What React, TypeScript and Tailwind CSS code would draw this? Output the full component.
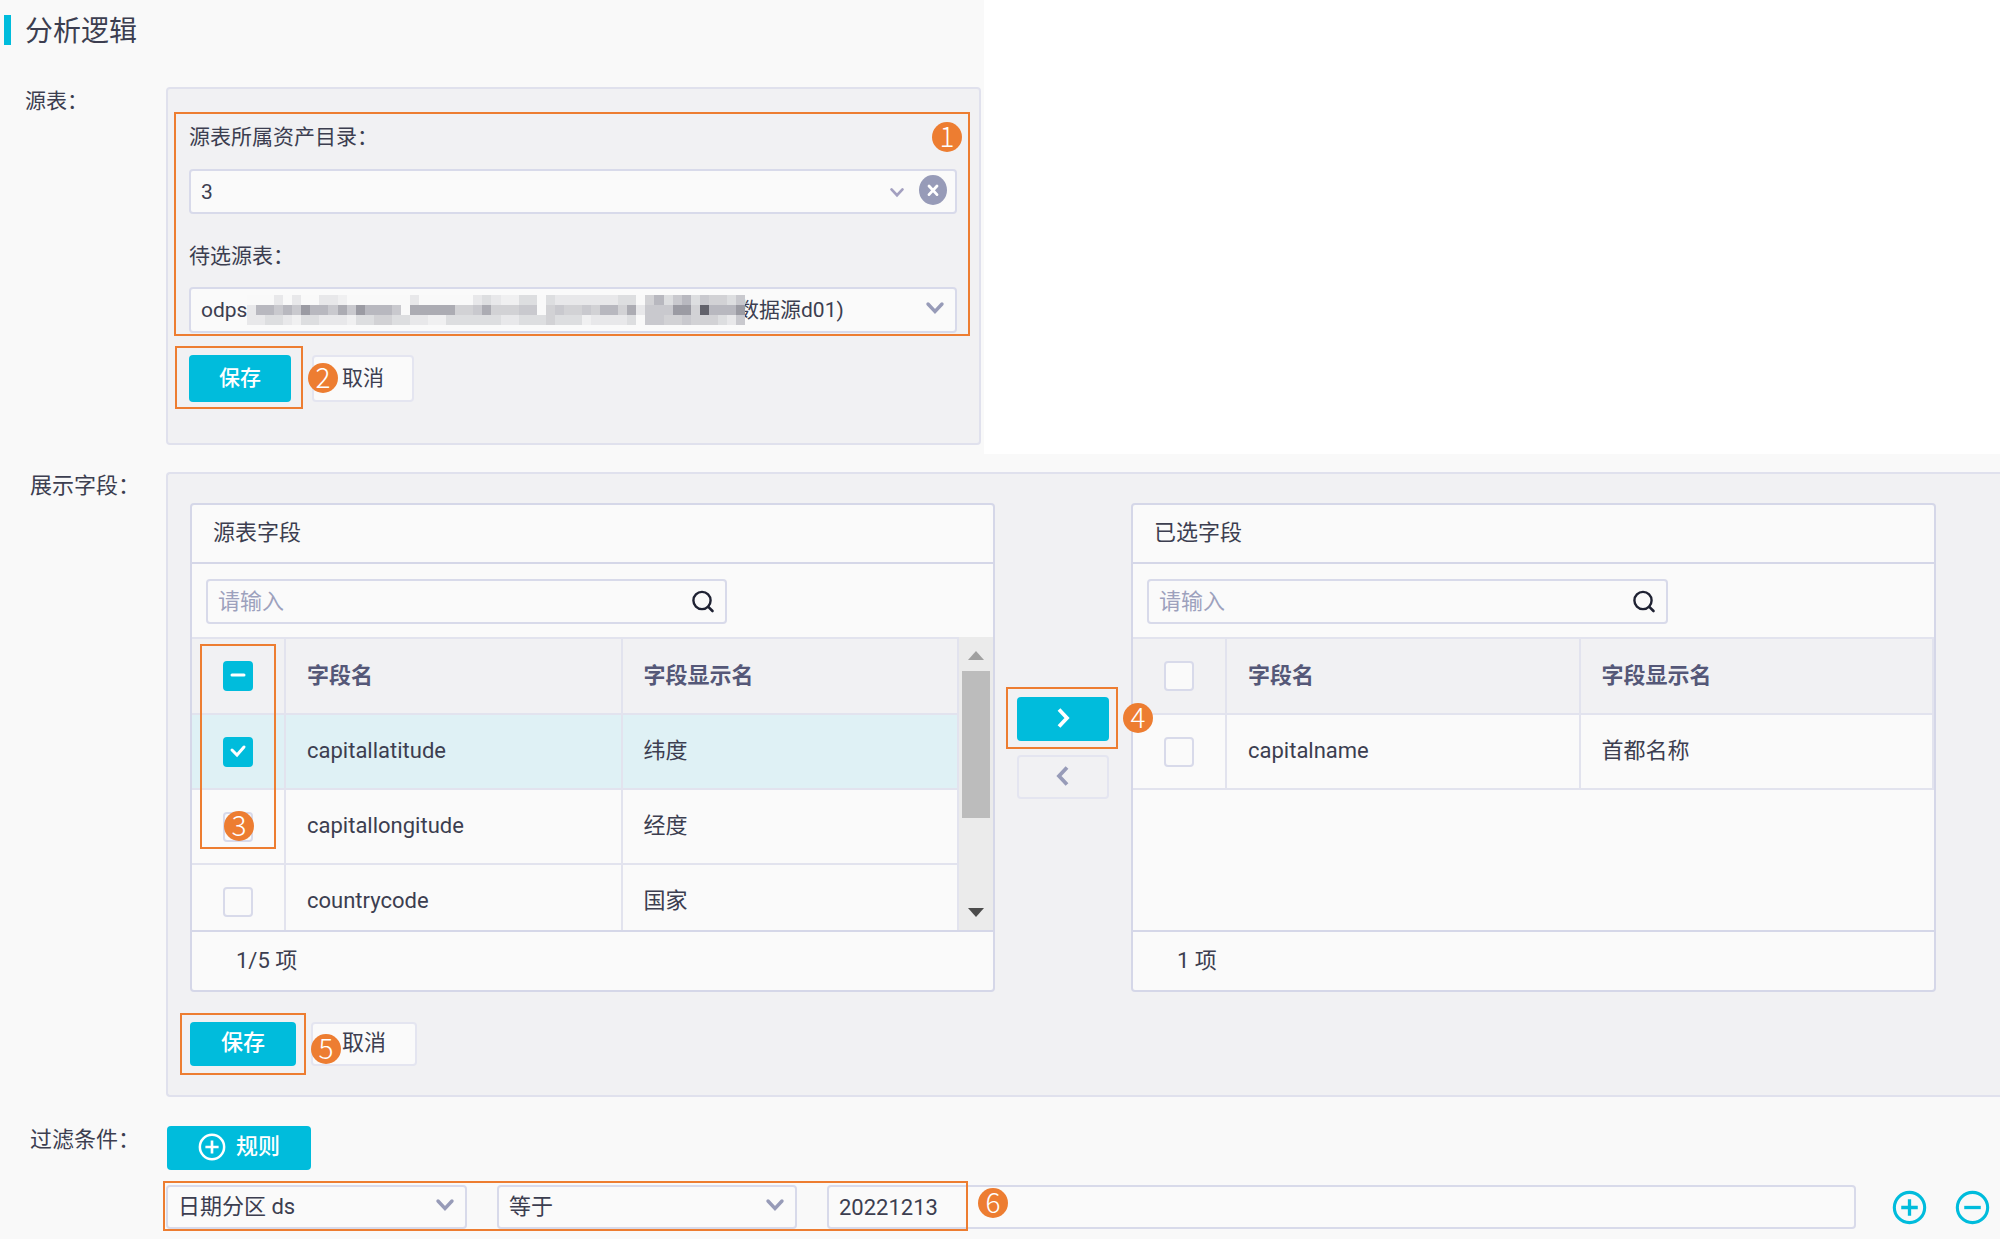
import React from "react";
import clsx from "clsx";

interface HighlightProps {
  className: string;
}

// Orange frame drawn around the part of the form a step talks about
const Highlight: React.FC<HighlightProps> = ({ className }) => (
  <div className={clsx("pointer-events-none absolute z-10 border-2 border-[#ed7d31]", className)} />
);

interface StepBadgeProps {
  step: number;
  className: string;
}

const StepBadge: React.FC<StepBadgeProps> = ({ step, className }) => (
  <span
    className={clsx(
      "pointer-events-none absolute z-20 flex size-[30px] items-center justify-center rounded-full bg-[#ed7d31] pb-1 font-['Noto_Sans_CJK_SC',sans-serif] text-[28px] leading-none font-light text-white",
      className
    )}
  >
    {step}
  </span>
);

const Chevron: React.FC<{ className: string }> = ({ className }) => (
  <svg viewBox="0 0 20 14" fill="none" className={clsx("pointer-events-none absolute", className)}>
    <path d="M3 3l7 7.5L17 3" stroke="currentColor" strokeWidth="3.4" strokeLinecap="round" />
  </svg>
);

const SearchIcon = () => (
  <svg viewBox="0 0 24 24" fill="none" className="size-6">
    <circle cx="11" cy="11.5" r="8.6" stroke="#1f2233" strokeWidth="2.4" />
    <path d="M17.3 17.8l4.2 4.2" stroke="#1f2233" strokeWidth="2.6" strokeLinecap="round" />
  </svg>
);

const CircleIcon: React.FC<{ plus?: boolean; className: string }> = ({ plus, className }) => (
  <svg viewBox="0 0 36 36" fill="none" className={className}>
    <circle cx="18" cy="18" r="15.6" stroke="currentColor" strokeWidth="3.2" />
    <path d={plus ? "M9.5 18h17M18 9.5v17" : "M9.5 18h17"} stroke="currentColor" strokeWidth="3.4" />
  </svg>
);

// Each character is one block: "." is empty, a is the lightest shade, i the darkest
const MOSAIC = [
  "...b.b..bba.......b......bcbaacc.cbbbbbbbcc.dfcefceddce",
  "bffefehffegehfffe.gggggddegdddee.deddedffdgbeeehhdifffh",
  "bbccbaccbbbaccddccbbaaccccccbbcccdcccabbbbc.eeddedddcbe",
];

const SHADES: Record<string, string> = {
  a: "#f0f0f1",
  b: "#e8e8ea",
  c: "#dddee0",
  d: "#d2d2d5",
  e: "#c9c9ce",
  f: "#b8b8bf",
  g: "#acacb3",
  h: "#9b9ba3",
  i: "#62626b",
};

const Mosaic = () => (
  <svg viewBox="0 0 55 3" preserveAspectRatio="none" shapeRendering="crispEdges" className="relative z-10 h-[30px] w-[498px]">
    {MOSAIC.map((line, y) =>
      line.split("").map((c, x) => (
        <rect key={`${x}-${y}`} x={x} y={y} width="1" height="1" fill={SHADES[c] ?? "#f9f9f9"} />
      ))
    )}
  </svg>
);

interface CheckBoxProps {
  label: string;
  state?: "checked" | "partial";
}

const CheckBox: React.FC<CheckBoxProps> = ({ label, state }) => (
  <span className="relative mx-auto block size-[30px]">
    <input
      type="checkbox"
      aria-label={label}
      defaultChecked={!!state}
      className="block size-[30px] appearance-none rounded-[4px] border-2 border-[#d8daea] bg-[#fafafa] checked:border-[#00bcdc] checked:bg-[#00bcdc]"
    />
    {state && (
      <svg viewBox="0 0 30 30" fill="none" className="pointer-events-none absolute inset-0">
        <path d={state === "partial" ? "M9 14h12" : "M9 13l5 5 7-8"} stroke="white" strokeWidth="3" strokeLinecap="round" />
      </svg>
    )}
  </span>
);

interface Field {
  name: string;
  display: string;
  checked?: boolean;
}

interface FieldCardProps {
  title: string;
  fields: Field[];
  summary: string;
  partial?: boolean;
  scroll?: boolean;
  children?: React.ReactNode;
}

const cell = "border-r-2 border-b-2 border-[#e2e3ee]";
const textCell = "pb-px pl-[21px]";

const FieldCard: React.FC<FieldCardProps> = ({ title, fields, summary, partial, scroll, children }) => (
  <div className="min-w-0 rounded-[4px] border-2 border-[#d5d7e8] bg-[#fafafa]">
    <h3 className="flex h-[59px] items-center border-b-2 border-[#d5d7e8] pb-[2px] pl-[21px]">{title}</h3>
    <div className="h-[73px] px-[14px] pt-[15px]">
      <div className="relative w-[521px]">
        <input
          type="text"
          aria-label={title}
          placeholder="请输入"
          className="block h-[45px] w-full rounded-[4px] border-2 border-[#d8daea] pr-12 pl-[10px] placeholder:text-[#9da1bd]"
        />
        <button type="button" aria-label="搜索" className="absolute top-[10px] right-[12px]">
          <SearchIcon />
        </button>
      </div>
    </div>
    <div className="relative">
      <div className="flex h-[293px] overflow-hidden">
        <table className="w-full min-w-0 flex-1 table-fixed border-separate border-spacing-0 self-start text-left">
          <thead>
            <tr className="bg-[#f1f1f3] text-[#555878]">
              <th className={clsx("h-[78px] w-[94px] border-t-2", cell)}>
                <CheckBox label="全选" state={partial ? "partial" : undefined} />
              </th>
              <th className={clsx("border-t-2 font-bold", textCell, cell)}>字段名</th>
              <th className={clsx("border-t-2 font-bold", textCell, cell)}>字段显示名</th>
            </tr>
          </thead>
          <tbody>
            {fields.map((f) => (
              <tr key={f.name} className={f.checked ? "bg-[#dff1f5]" : ""}>
                <td className={clsx("h-[75px]", cell)}>
                  <CheckBox label={f.name} state={f.checked ? "checked" : undefined} />
                </td>
                <td className={clsx(textCell, cell)}>{f.name}</td>
                <td className={clsx(textCell, cell)}>{f.display}</td>
              </tr>
            ))}
          </tbody>
        </table>
        {scroll && (
          <div className="flex w-[34px] shrink-0 flex-col items-center bg-[#ebebeb]">
            <svg viewBox="0 0 16 9" className="mt-[14px] h-[9px] w-4">
              <path d="M0 9l8-9 8 9z" fill="#a0a0a0" />
            </svg>
            <div className="mt-[11px] h-[147px] w-[28px] bg-[#bcbcbc]" />
            <svg viewBox="0 0 16 9" className="mt-auto mb-[13px] h-[9px] w-4">
              <path d="M0 0l8 9 8-9z" fill="#4c4c4c" />
            </svg>
          </div>
        )}
      </div>
      {children}
    </div>
    <div className="flex h-[60px] items-center border-t-2 border-[#d5d7e8] pl-11">{summary}</div>
  </div>
);

const sourceFields: Field[] = [
  { name: "capitallatitude", display: "纬度", checked: true },
  { name: "capitallongitude", display: "经度" },
  { name: "countrycode", display: "国家" },
];

const selectedFields: Field[] = [{ name: "capitalname", display: "首都名称" }];

const control = "block w-full appearance-none rounded-[4px] border-2 border-[#d8daea] bg-[#fafafa] pl-[10px]";
const primary = "rounded-[4px] bg-[#00bcdc] pb-[2px] font-medium text-white";
const secondary = "rounded-[4px] border-2 border-[#e4e5f0] bg-[#fafafa] pb-[2px]";

const App = () => {
  return (
    <main className="flex min-h-screen flex-col bg-[#f9f9f9] font-[Roboto,'Noto_Sans_CJK_SC',sans-serif] text-[22px] leading-7 text-[#3c3e50]">
      <div className="bg-white">
        <section className="w-[49.2%] bg-[#f9f9f9] pb-[9px] text-[21px]">
          <div className="flex h-[87px] items-start gap-[14px] pt-[15px] pl-1">
            <span className="h-[30px] w-[7px] bg-[#00bcdc]" />
            <h2 className="text-[28px] leading-[34px]">分析逻辑</h2>
          </div>
          <div className="grid grid-cols-[166px_1fr] pr-[3px]">
            <div className="pl-[25px]">源表：</div>
            <div className="rounded-[4px] border-2 border-[#e0e1ed] bg-[#f1f1f3] pt-[23px] pr-[9px] pb-[41px] pl-[6px]">
              <div className="relative pt-[9px] pr-[13px] pb-[3px] pl-[15px]">
                <label htmlFor="catalog" className="mb-4 flex h-8 items-center">
                  源表所属资产目录：
                </label>
                <div className="relative mb-[26px]">
                  <select id="catalog" className={clsx(control, "h-[45px]")}>
                    <option>3</option>
                  </select>
                  <Chevron className="top-[18px] right-[52px] h-[11px] w-4 text-[#a3a0c0]" />
                  <button type="button" aria-label="清除" className="absolute top-[6px] right-[10px]">
                    <svg viewBox="0 0 28 30" fill="none" className="h-[30px] w-7">
                      <ellipse cx="14" cy="15" rx="14" ry="15" fill="#979bb8" />
                      <path d="M10 11l8 8.600M18 11l-8 8.600" stroke="white" strokeWidth="2.800" strokeLinecap="round" />
                    </svg>
                  </button>
                </div>
                <label htmlFor="table" className="mb-[15px] flex h-8 items-center">
                  待选源表：
                </label>
                <div className="relative">
                  <select id="table" className={clsx(control, "h-[46px]")}>
                    <option>odps</option>
                  </select>
                  <div className="pointer-events-none absolute inset-y-0 left-[58px] flex items-center pb-px">
                    <Mosaic />
                    <span className="-ml-[7px]">数据源d01)</span>
                  </div>
                  <Chevron className="top-[14px] right-3 h-[14px] w-5 text-[#979bb8]" />
                </div>
                <Highlight className="inset-0" />
                <StepBadge step={1} className="top-[10px] right-2" />
              </div>
              <div className="mt-[19px] flex gap-[21px] pl-[15px]">
                <div className="relative">
                  <button type="button" className={clsx(primary, "block h-[47px] w-[102px]")}>
                    保存
                  </button>
                  <Highlight className="-top-[9px] -right-3 -bottom-[7px] -left-[14px]" />
                </div>
                <div className="relative">
                  <button type="button" className={clsx(secondary, "block h-[47px] w-[102px]")}>
                    取消
                  </button>
                  <StepBadge step={2} className="top-2 -left-1" />
                </div>
              </div>
            </div>
          </div>
        </section>
      </div>

      <section className="grid grid-cols-[166px_1fr] pt-[18px]">
        <div className="pl-[30px]">展示字段：</div>
        <div className="min-w-0 rounded-l-[4px] border-2 border-r-0 border-[#e0e1ed] bg-[#f1f1f3] pt-[29px] pr-16 pb-[29px] pl-[22px]">
          <div className="grid grid-cols-[minmax(0,1fr)_136px_minmax(0,1fr)]">
            <FieldCard title="源表字段" fields={sourceFields} summary="1/5 项" partial scroll>
              <Highlight className="top-[7px] left-2 h-[205px] w-[76px]" />
              <StepBadge step={3} className="top-[174px] left-8" />
            </FieldCard>
            <div className="flex flex-col items-center gap-[14px] pt-[194px]">
              <div className="relative">
                <button type="button" aria-label="添加" className={clsx(primary, "flex h-11 w-[92px] items-center justify-center")}>
                  <svg viewBox="0 0 14 22" fill="none" className="h-[22px] w-[14px]">
                    <path d="M3 2.500l8 8.500-8 8.500" stroke="white" strokeWidth="3.800" />
                  </svg>
                </button>
                <Highlight className="-top-[10px] -right-[9px] -bottom-2 -left-[11px]" />
                <StepBadge step={4} className="top-[6px] left-[106px]" />
              </div>
              <button
                type="button"
                aria-label="移除"
                className="flex h-11 w-[92px] items-center justify-center rounded-[4px] border-2 border-[#e4e5f0] pb-[2px]"
              >
                <svg viewBox="0 0 14 22" fill="none" className="h-[22px] w-[14px]">
                  <path d="M11 2.500L3 11l8 8.500" stroke="#979bb8" strokeWidth="3.800" />
                </svg>
              </button>
            </div>
            <FieldCard title="已选字段" fields={selectedFields} summary="1 项" />
          </div>
          <div className="mt-[30px] flex gap-[15px]">
            <div className="relative">
              <button type="button" className={clsx(primary, "block h-11 w-[106px]")}>
                保存
              </button>
              <Highlight className="-inset-x-[10px] -inset-y-[9px]" />
            </div>
            <div className="relative">
              <button type="button" className={clsx(secondary, "block h-11 w-[106px]")}>
                取消
              </button>
              <StepBadge step={5} className="top-3 left-0" />
            </div>
          </div>
        </div>
      </section>

      <section className="grid grid-cols-[166px_1fr] pt-[29px] pb-[10px]">
        <div className="pl-[30px]">过滤条件：</div>
        <div className="min-w-0">
          <button type="button" className={clsx(primary, "mb-[15px] ml-px flex h-11 w-[144px] items-center justify-center gap-[10px]")}>
            <CircleIcon plus className="size-7" />
            规则
          </button>
          <div className="relative flex items-center pr-[10px]">
            <div className="relative mr-[30px] w-[301px] shrink-0">
              <select aria-label="字段" className={clsx(control, "h-11")}>
                <option>日期分区 ds</option>
              </select>
              <Chevron className="top-[13px] right-3 h-[14px] w-5 text-[#979bb8]" />
            </div>
            <div className="relative mr-[30px] w-[300px] shrink-0">
              <select aria-label="条件" className={clsx(control, "h-11")}>
                <option>等于</option>
              </select>
              <Chevron className="top-[13px] right-3 h-[14px] w-5 text-[#979bb8]" />
            </div>
            <input
              type="text"
              aria-label="值"
              defaultValue="20221213"
              className="h-11 min-w-0 flex-1 rounded-[4px] border-2 border-[#d8daea] bg-[#fafafa] pl-[10px]"
            />
            <button type="button" aria-label="添加条件" className="ml-9 text-[#00bcdc]">
              <CircleIcon plus className="size-[35px]" />
            </button>
            <button type="button" aria-label="删除条件" className="ml-7 text-[#00bcdc]">
              <CircleIcon className="size-[35px]" />
            </button>
            <Highlight className="-top-1 -bottom-[2px] -left-[3px] w-[805px]" />
            <StepBadge step={6} className="top-[3px] left-[812px]" />
          </div>
        </div>
      </section>
    </main>
  );
};

export default App;
